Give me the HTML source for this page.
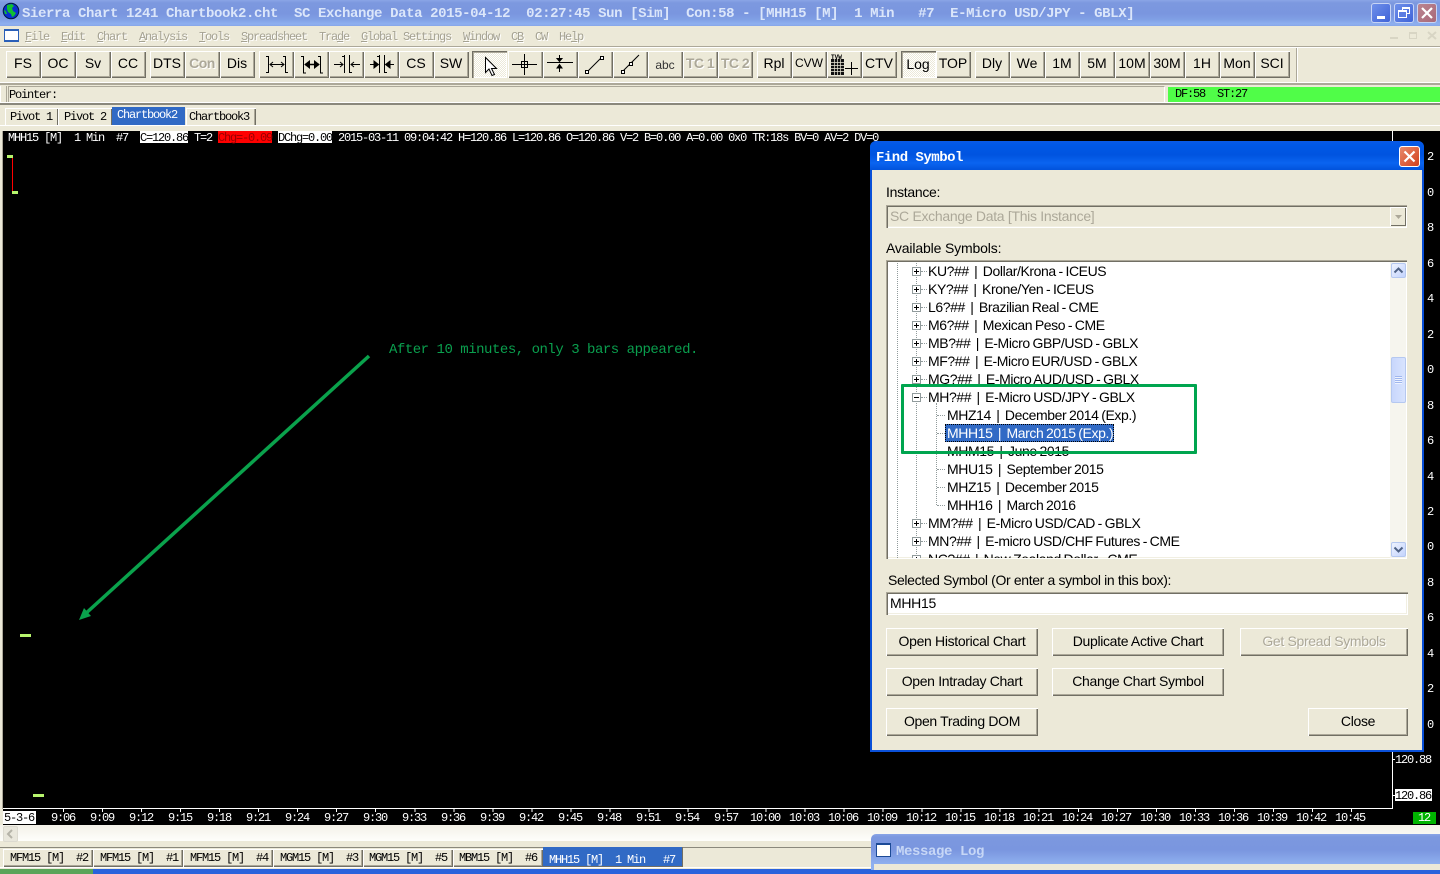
<!DOCTYPE html>
<html><head><meta charset="utf-8"><title>Sierra Chart</title>
<style>
html,body{margin:0;padding:0;width:1440px;height:874px;overflow:hidden;background:#ece9d8}
div,span{box-sizing:border-box}
.a{position:absolute}
.t{position:absolute;white-space:pre;font-family:"Liberation Mono",monospace;font-size:12px;letter-spacing:-1.2px;line-height:14px;color:#000}
.w{color:#fff}
.m{color:#a5a292;text-shadow:1px 1px 0 #fff}
.b{position:absolute;top:51px;width:35px;height:27px;background:#ece9d8;box-shadow:inset 1px 1px 0 #fff,inset -1px -1px 0 #716f64,inset -2px -2px 0 #aca899;font:14px/25px "Liberation Sans",sans-serif;text-align:center;color:#000;padding-right:1px}
.b.d{color:#aca899;font-weight:bold;text-shadow:1px 1px 0 #fff;letter-spacing:-.5px}
.b.p{background:repeating-conic-gradient(#fff 0 25%,#ece9d8 0 50%) 0 0/2px 2px;box-shadow:inset 1px 1px 0 #716f64,inset 2px 2px 0 #aca899,inset -1px -1px 0 #fff}
.b svg{position:absolute;left:0;top:0}
.s{font:14px/18px "Liberation Sans",sans-serif;position:absolute;white-space:pre;color:#000;letter-spacing:-.3px}
.db{position:absolute;height:28px;background:#ece9d8;box-shadow:inset 1px 1px 0 #fff,inset -1px -1px 0 #716f64,inset -2px -2px 0 #aca899;font:14px/26px "Liberation Sans",sans-serif;text-align:center;color:#000;letter-spacing:-.33px}
.inset{position:absolute;box-shadow:inset 1px 1px 0 #aca899,inset 2px 2px 0 #716f64,inset -1px -1px 0 #fff,inset -2px -2px 0 #f1efe2}
.tab{position:absolute;top:849px;height:18px;background:#ece9d8;box-shadow:inset 1px 1px 0 #fff,inset -1px -1px 0 #716f64,inset -2px -2px 0 #aca899}
.r{position:absolute;left:40px;font:14px/18px "Liberation Sans",sans-serif;white-space:pre;color:#000;letter-spacing:-.4px;word-spacing:-.8px}
.c{left:59px}
.pb{position:absolute;left:24px;width:9px;height:9px;border:1px solid #919b9c;background:#fff}
.pb:before{content:"";position:absolute;left:1px;top:3px;width:5px;height:1px;background:#000}
.pb.x:after{content:"";position:absolute;left:3px;top:1px;width:1px;height:5px;background:#000}
.dh{position:absolute;height:1px;border-top:1px dotted #919b9c}
.dv{position:absolute;width:1px;border-left:1px dotted #919b9c}
.ax{position:absolute;left:1427px;font:12px/14px "Liberation Mono",monospace;color:#fff}
.tm{position:absolute;top:811px;width:40px;text-align:center;font:12px/14px "Liberation Mono",monospace;letter-spacing:-1.2px;color:#fff}
</style></head><body>

<!-- title bar -->
<div class="a" style="left:0;top:0;width:1440px;height:26px;background:linear-gradient(#8aa5e6 0,#7c98df 3px,#7a96df 14px,#7f9fe4 19px,#8fb0ef 24px,#86a6e8 26px)"></div>
<svg class="a" style="left:2px;top:2px" width="18" height="18" viewBox="0 0 18 18"><circle cx="9" cy="9" r="7.8" fill="#0a2fd0" stroke="#001a40"/><path d="M5 3l5-1 2 2-2 2 1 3 3 2-2 3-2 1-1-3-3-2-1-3z" fill="#10c030"/><path d="M2 8l2 1 1 3-2 0z" fill="#10c030"/></svg>
<div class="t" style="left:22px;top:7px;font-size:14px;letter-spacing:-.4px;font-weight:bold;color:#dbe6fa">Sierra Chart 1241 Chartbook2.cht  SC Exchange Data 2015-04-12  02:27:45 Sun [Sim]  Con:58 - [MHH15 [M]  1 Min   #7  E-Micro USD/JPY - GBLX]</div>
<div class="a" style="left:1371px;top:3px;width:20px;height:20px;border-radius:3px;background:linear-gradient(135deg,#6f90ea,#3f63d8);border:1px solid #c7d4f5"><div class="a" style="left:5px;top:12px;width:8px;height:3px;background:#fff"></div></div>
<div class="a" style="left:1394px;top:3px;width:20px;height:20px;border-radius:3px;background:linear-gradient(135deg,#6f90ea,#3f63d8);border:1px solid #c7d4f5"><div class="a" style="left:7px;top:3px;width:8px;height:7px;border:1px solid #fff;border-top-width:2px"></div><div class="a" style="left:3px;top:6px;width:9px;height:8px;border:1px solid #fff;border-top-width:2px;background:#5b7de2"></div></div>
<div class="a" style="left:1417px;top:3px;width:20px;height:20px;border-radius:3px;background:linear-gradient(135deg,#bb8590,#a86878);border:1px solid #c7d4f5"><svg class="a" style="left:3px;top:3px" width="12" height="12"><path d="M1 1L11 11M11 1L1 11" stroke="#fff" stroke-width="2.2"/></svg></div>

<!-- menu -->
<div class="a" style="left:4px;top:29px;width:15px;height:13px;background:#fff;border:1px solid #2a5fb8;border-top-width:2px;border-bottom-width:2px"></div>
<div class="t m" style="left:25px;top:30px"><u>F</u>ile</div>
<div class="t m" style="left:61px;top:30px"><u>E</u>dit</div>
<div class="t m" style="left:97px;top:30px"><u>C</u>hart</div>
<div class="t m" style="left:139px;top:30px"><u>A</u>nalysis</div>
<div class="t m" style="left:199px;top:30px"><u>T</u>ools</div>
<div class="t m" style="left:241px;top:30px"><u>S</u>preadsheet</div>
<div class="t m" style="left:319px;top:30px">Tra<u>d</u>e</div>
<div class="t m" style="left:361px;top:30px"><u>G</u>lobal Settings</div>
<div class="t m" style="left:463px;top:30px"><u>W</u>indow</div>
<div class="t m" style="left:511px;top:30px">C<u>B</u></div>
<div class="t m" style="left:535px;top:30px">CW</div>
<div class="t m" style="left:559px;top:30px">He<u>l</u>p</div>
<div class="a" style="left:1390px;top:37px;width:8px;height:2px;background:#d8d5c4"></div>
<div class="a" style="left:1409px;top:32px;width:8px;height:7px;border:1px solid #d8d5c4;border-top-width:2px"></div>
<svg class="a" style="left:1427px;top:31px" width="10" height="9"><path d="M1 1L9 8M9 1L1 8" stroke="#d8d5c4" stroke-width="2"/></svg>

<div class="a" style="left:0;top:46px;width:1440px;height:1px;background:#aca899"></div>
<div class="a" style="left:0;top:47px;width:1440px;height:1px;background:#fff"></div>

<!-- toolbar -->
<div class="b" style="left:6px">FS</div>
<div class="b" style="left:41px">OC</div>
<div class="b" style="left:76px">Sv</div>
<div class="b" style="left:111px">CC</div>
<div class="b" style="left:150px">DTS</div>
<div class="b d" style="left:185px">Con</div>
<div class="b" style="left:220px">Dis</div>
<div class="b" style="left:259px"><svg width="35" height="27" fill="none" stroke="#000"><path d="M7 5.500H9.500V22M9.500 21.500H7M26.500 5V22M26.500 21.500H29M26.500 5.500H24"/><path d="M11 13.500H25M14 11L11 13.500 14 16M22 11L25 13.500 22 16"/></svg></div>
<div class="b" style="left:294px"><svg width="35" height="27" fill="none" stroke="#000"><path d="M7 5.500H9.500V22H12M26.500 5V22H29M26.500 5.500H24"/><path d="M11 13.500H25" stroke-width="1.500"/><path d="M11 13.500L15.500 10V17zM25 13.500L20.500 10V17z" fill="#000"/></svg></div>
<div class="b" style="left:329px"><svg width="35" height="27" fill="none" stroke="#000"><path d="M15.500 4V22M20.500 4V22M13 5.500H15.500M20.500 21.500H23"/><path d="M5 13.500H14M11 11L14 13.500 11 16M22 13.500H31M25 11L22 13.500 25 16"/></svg></div>
<div class="b" style="left:364px"><svg width="35" height="27" fill="none" stroke="#000"><path d="M15.500 4V22M20.500 4V22M13 5.500H15.500M20.500 21.500H23"/><path d="M6 13.500H14M22 13.500H30"/><path d="M14.500 13.500L10 10V17zM21.500 13.500L26 10V17z" fill="#000"/></svg></div>
<div class="b" style="left:399px">CS</div>
<div class="b" style="left:434px">SW</div>
<div class="b p" style="left:472px"><svg width="35" height="27"><path d="M13.500 6.500V21.500L17 18 20 24.500 22.500 23.500 19.500 17.500H24.500z" fill="#fff" stroke="#000"/></svg></div>
<div class="b" style="left:508px"><svg width="35" height="27" fill="none" stroke="#000"><path d="M4 13.500H29M16.500 3V24"/><rect x="13.500" y="10.500" width="6" height="6"/></svg></div>
<div class="b" style="left:543px"><svg width="35" height="27" fill="none" stroke="#000"><path d="M4 11.500H30M16.500 4V9.500M16.500 14V21"/><path d="M14 7.500L16.500 10.500 19 7.500zM14 17L16.500 13.500 19 17z" fill="#000"/></svg></div>
<div class="b" style="left:578px"><svg width="35" height="27" fill="none" stroke="#000"><path d="M10 20L23 7"/><rect x="7.500" y="19.500" width="3" height="3" fill="#fff"/><rect x="22.500" y="5.500" width="3" height="3" fill="#fff"/></svg></div>
<div class="b" style="left:613px"><svg width="35" height="27" fill="none" stroke="#000"><path d="M10 20L26 4"/><rect x="8.500" y="19.500" width="3" height="3" fill="#fff"/><rect x="16.500" y="11.500" width="3" height="3" fill="#fff"/></svg></div>
<div class="b" style="left:648px;font-size:12px;color:#333;line-height:28px">abc</div>
<div class="b d" style="left:683px">TC 1</div>
<div class="b d" style="left:718px">TC 2</div>
<div class="b" style="left:757px">Rpl</div>
<div class="b" style="left:792px;font-size:12px;line-height:24px">CVW</div>
<div class="b" style="left:827px"><svg width="35" height="27"><text x="4" y="8" font-family="Liberation Mono,monospace" font-size="6" font-weight="bold" letter-spacing="0">TVW</text><rect x="4" y="8" width="13" height="16" fill="#111"/><path d="M4 11.500H17M4 14.500H17M4 17.500H17M4 20.500H17M7.500 8V24M10.500 8V24M13.500 8V24" stroke="#ece9d8" stroke-width=".7"/><path d="M18 17.500H31M24.500 11V24" stroke="#000"/></svg></div>
<div class="b" style="left:862px">CTV</div>
<div class="b p" style="left:901px;line-height:26px">Log</div>
<div class="b" style="left:936px">TOP</div>
<div class="b" style="left:975px">Dly</div>
<div class="b" style="left:1010px">We</div>
<div class="b" style="left:1045px">1M</div>
<div class="b" style="left:1080px">5M</div>
<div class="b" style="left:1115px">10M</div>
<div class="b" style="left:1150px">30M</div>
<div class="b" style="left:1185px">1H</div>
<div class="b" style="left:1220px">Mon</div>
<div class="b" style="left:1255px">SCI</div>
<div class="a" style="left:1296px;top:48px;width:1px;height:34px;background:#aca899"></div>
<div class="a" style="left:1297px;top:48px;width:1px;height:34px;background:#fff"></div>

<div class="a" style="left:0;top:82px;width:1440px;height:1px;background:#fff"></div>
<div class="a" style="left:0;top:83px;width:1440px;height:2px;background:#aca899"></div>

<!-- status -->
<div class="a" style="left:0;top:86px;width:7px;height:16px;border-right:1px solid #aca899;border-left:1px solid #fff"></div>
<div class="a" style="left:8px;top:86px;width:1157px;height:16px;border-top:1px solid #aca899;border-left:1px solid #aca899;border-right:1px solid #fff"></div>
<div class="t" style="left:9px;top:88px">Pointer:</div>
<div class="a" style="left:1168px;top:87px;width:272px;height:15px;background:#50fd48"></div>
<div class="t" style="left:1175px;top:87px">DF:58  ST:27</div>
<div class="a" style="left:0;top:102px;width:1440px;height:1px;background:#fff"></div>
<div class="a" style="left:0;top:103px;width:1440px;height:2px;background:#8a887c"></div>

<!-- chart tabs -->
<div class="a" style="left:5px;top:108px;width:53px;height:17px;box-shadow:inset 1px 1px 0 #fff,inset -1px 0 0 #716f64"></div>
<div class="t" style="left:10px;top:110px">Pivot 1</div>
<div class="a" style="left:58px;top:108px;width:54px;height:17px;box-shadow:inset 1px 1px 0 #fff,inset -1px 0 0 #716f64"></div>
<div class="t" style="left:64px;top:110px">Pivot 2</div>
<div class="a" style="left:112px;top:107px;width:73px;height:18px;background:#316ac5"></div>
<div class="t w" style="left:117px;top:108px">Chartbook2</div>
<div class="a" style="left:186px;top:108px;width:70px;height:17px;box-shadow:inset 1px 1px 0 #fff,inset -1px 0 0 #716f64,inset -2px 0 0 #aca899"></div>
<div class="t" style="left:189px;top:110px">Chartbook3</div>
<div class="a" style="left:0;top:125px;width:1440px;height:1px;background:#fff"></div>

<!-- chart -->
<div class="a" style="left:3px;top:131px;width:1437px;height:694px;background:#000"></div>
<div class="a" style="left:2px;top:131px;width:1px;height:678px;background:#aca899"></div>
<div class="t w" style="left:8px;top:131px">MHH15 [M]  1 Min  #7</div>
<div class="a" style="left:140px;top:131px;width:48px;height:12px;background:#fff"></div>
<div class="t" style="left:140px;top:131px">C=120.86</div>
<div class="t w" style="left:194px;top:131px">T=2</div>
<div class="a" style="left:218px;top:131px;width:54px;height:12px;background:#f00"></div>
<div class="t" style="left:218px;top:131px;color:#900">Chg=-0.09</div>
<div class="a" style="left:278px;top:131px;width:54px;height:12px;background:#fff"></div>
<div class="t" style="left:278px;top:131px">DChg=0.00</div>
<div class="t w" style="left:338px;top:131px">2015-03-11 09:04:42 H=120.86 L=120.86 O=120.86 V=2 B=0.00 A=0.00 0x0 TR:18s BV=0 AV=2 DV=0</div>

<!-- bars -->
<div class="a" style="left:12px;top:156px;width:1px;height:36px;background:#f00"></div>
<div class="a" style="left:7px;top:155px;width:6px;height:3px;background:#b7f56d"></div>
<div class="a" style="left:12px;top:191px;width:6px;height:3px;background:#b7f56d"></div>
<div class="a" style="left:20px;top:634px;width:11px;height:3px;background:#b7f56d"></div>
<div class="a" style="left:33px;top:794px;width:11px;height:3px;background:#b7f56d"></div>

<!-- annotation -->
<div class="t" style="left:389px;top:343px;font-size:14px;letter-spacing:-.48px;color:#0a9f4e">After 10 minutes, only 3 bars appeared.</div>
<svg class="a" style="left:70px;top:345px" width="310" height="285"><path d="M299 11L14 270" stroke="#0aa24c" stroke-width="3.500" fill="none"/><path d="M9 275L14 263 21 271z" fill="#0aa24c"/></svg>

<!-- right axis -->
<div class="a" style="left:1392px;top:131px;width:1px;height:678px;background:#fff"></div>
<div class="a" style="left:3px;top:808px;width:1390px;height:1px;background:#fff"></div>
<div class="ax" style="top:150px">2</div><div class="ax" style="top:186px">0</div><div class="ax" style="top:221px">8</div><div class="ax" style="top:257px">6</div><div class="ax" style="top:292px">4</div><div class="ax" style="top:328px">2</div><div class="ax" style="top:363px">0</div><div class="ax" style="top:399px">8</div><div class="ax" style="top:434px">6</div><div class="ax" style="top:470px">4</div><div class="ax" style="top:505px">2</div><div class="ax" style="top:540px">0</div><div class="ax" style="top:576px">8</div><div class="ax" style="top:611px">6</div><div class="ax" style="top:647px">4</div><div class="ax" style="top:682px">2</div><div class="ax" style="top:718px">0</div>
<div class="a" style="left:1392px;top:759px;width:3px;height:1px;background:#fff"></div>
<div class="t w" style="left:1395px;top:753px">120.88</div>
<div class="a" style="left:1392px;top:795px;width:3px;height:1px;background:#fff"></div>
<div class="a" style="left:1395px;top:789px;width:37px;height:12px;background:#fff"></div>
<div class="t" style="left:1395px;top:789px">120.86</div>

<!-- time axis -->
<div class="a" style="left:63px;top:809px;width:1290px;height:3px;background:repeating-linear-gradient(90deg,#fff 0 1px,transparent 1px 39.03px)"></div>
<div class="a" style="left:3px;top:811px;width:33px;height:13px;background:#fff"></div>
<div class="t" style="left:4px;top:811px">5-3-6</div>
<div class="tm" style="left:43px">9:06</div><div class="tm" style="left:82px">9:09</div><div class="tm" style="left:121px">9:12</div><div class="tm" style="left:160px">9:15</div><div class="tm" style="left:199px">9:18</div><div class="tm" style="left:238px">9:21</div><div class="tm" style="left:277px">9:24</div><div class="tm" style="left:316px">9:27</div><div class="tm" style="left:355px">9:30</div><div class="tm" style="left:394px">9:33</div><div class="tm" style="left:433px">9:36</div><div class="tm" style="left:472px">9:39</div><div class="tm" style="left:511px">9:42</div><div class="tm" style="left:550px">9:45</div><div class="tm" style="left:589px">9:48</div><div class="tm" style="left:628px">9:51</div><div class="tm" style="left:667px">9:54</div><div class="tm" style="left:706px">9:57</div><div class="tm" style="left:745px">10:00</div><div class="tm" style="left:784px">10:03</div><div class="tm" style="left:823px">10:06</div><div class="tm" style="left:862px">10:09</div><div class="tm" style="left:901px">10:12</div><div class="tm" style="left:940px">10:15</div><div class="tm" style="left:979px">10:18</div><div class="tm" style="left:1018px">10:21</div><div class="tm" style="left:1057px">10:24</div><div class="tm" style="left:1096px">10:27</div><div class="tm" style="left:1135px">10:30</div><div class="tm" style="left:1174px">10:33</div><div class="tm" style="left:1213px">10:36</div><div class="tm" style="left:1252px">10:39</div><div class="tm" style="left:1291px">10:42</div><div class="tm" style="left:1330px">10:45</div>
<div class="a" style="left:1413px;top:812px;width:23px;height:12px;background:#00b400"></div>
<div class="t w" style="left:1418px;top:811px">12</div>

<!-- scrollbar + tabs -->
<div class="a" style="left:0;top:825px;width:1440px;height:16px;background:linear-gradient(#f3f1e8,#fefefb)"></div>
<div class="a" style="left:3px;top:826px;width:15px;height:16px;background:#e9e7dc;border:1px solid #dcdad0;border-radius:2px"></div>
<svg class="a" style="left:6px;top:829px" width="9" height="10"><path d="M6 1L2 5 6 9" stroke="#b5b3a8" stroke-width="2" fill="none"/></svg>
<div class="a" style="left:0;top:847px;width:1440px;height:1px;background:#8a887c"></div>
<div class="tab" style="left:3px;width:90px"></div><div class="t" style="left:10px;top:851px">MFM15 [M]  #2</div>
<div class="tab" style="left:93px;width:90px"></div><div class="t" style="left:100px;top:851px">MFM15 [M]  #1</div>
<div class="tab" style="left:183px;width:90px"></div><div class="t" style="left:190px;top:851px">MFM15 [M]  #4</div>
<div class="tab" style="left:273px;width:90px"></div><div class="t" style="left:280px;top:851px">MGM15 [M]  #3</div>
<div class="tab" style="left:363px;width:90px"></div><div class="t" style="left:369px;top:851px">MGM15 [M]  #5</div>
<div class="tab" style="left:453px;width:90px"></div><div class="t" style="left:459px;top:851px">MBM15 [M]  #6</div>
<div class="a" style="left:543px;top:847px;width:140px;height:20px;background:#316ac5;box-shadow:inset -1px -1px 0 #716f64"></div>
<div class="t w" style="left:549px;top:853px">MHH15 [M]  1 Min   #7</div>
<div class="a" style="left:0;top:867px;width:1440px;height:1px;background:#fff"></div>
<div class="a" style="left:0;top:869px;width:1440px;height:5px;background:#2a62dc"></div>
<div class="a" style="left:0;top:869px;width:93px;height:5px;background:#5aa45a"></div>

<!-- message log -->
<div class="a" style="left:871px;top:834px;width:569px;height:36px;border-radius:5px 0 0 0;background:linear-gradient(#8aa5e6 0,#7c98df 3px,#7a96df 16px,#8fb0ef 30px)"></div>
<div class="a" style="left:874px;top:864px;width:566px;height:6px;background:#ece9d8"></div>
<div class="a" style="left:876px;top:843px;width:15px;height:14px;background:#fff;border:1px solid #1c4a96;border-top-width:2px"></div>
<div class="t" style="left:896px;top:845px;font-size:14px;letter-spacing:-.4px;font-weight:bold;color:#c7d7f6">Message Log</div>
<div class="a" style="left:0;top:870px;width:1440px;height:4px;background:#2a62dc"></div>
<div class="a" style="left:0;top:870px;width:93px;height:4px;background:#5aa45a"></div>

<!-- dialog -->
<div class="a" style="left:870px;top:141px;width:554px;height:611px;border-radius:6px 6px 0 0;background:#0a50d8"></div>
<div class="a" style="left:870px;top:141px;width:554px;height:30px;border-radius:6px 6px 0 0;background:linear-gradient(#0a5ae6 0,#0058e6 4px,#0054e0 14px,#0a64f0 22px,#0050d8 30px)"></div>
<div class="a" style="left:872px;top:170px;width:550px;height:580px;background:#ece9d8"></div>
<div class="t" style="left:876px;top:151px;font-size:14px;letter-spacing:-.5px;font-weight:bold;color:#fff">Find Symbol</div>
<div class="a" style="left:1399px;top:146px;width:21px;height:21px;border-radius:3px;background:linear-gradient(135deg,#e88a6c,#d2401c);border:1px solid #fff"><svg class="a" style="left:3px;top:3px" width="13" height="13"><path d="M1.500 1.500L11.500 11.500M11.500 1.500L1.500 11.500" stroke="#fff" stroke-width="2.200"/></svg></div>

<div class="s" style="left:886px;top:183px">Instance:</div>
<div class="inset" style="left:886px;top:205px;width:521px;height:23px;background:#ece9d8"></div>
<div class="s" style="left:890px;top:207px;color:#aca899">SC Exchange Data [This Instance]</div>
<div class="a" style="left:1390px;top:207px;width:16px;height:19px;background:#ece9d8;box-shadow:inset 1px 1px 0 #fff,inset -1px -1px 0 #716f64"></div>
<svg class="a" style="left:1394px;top:214px" width="9" height="6"><path d="M1 1H8L4.500 5z" fill="#aca899"/></svg>
<div class="s" style="left:886px;top:239px;letter-spacing:-.15px">Available Symbols:</div>

<div class="inset" style="left:886px;top:260px;width:521px;height:299px;background:#fff"></div>
<div class="a" style="left:888px;top:263px;width:502px;height:295px;overflow:hidden">
 <div class="dv" style="left:9px;top:0;height:295px"></div>
 <div class="dv" style="left:28px;top:0;height:295px"></div>
 <div class="dv" style="left:48px;top:140px;height:102px"></div>
 <div class="dh" style="left:33px;top:8px;width:6px"></div><div class="dh" style="left:33px;top:26px;width:6px"></div><div class="dh" style="left:33px;top:44px;width:6px"></div><div class="dh" style="left:33px;top:62px;width:6px"></div><div class="dh" style="left:33px;top:80px;width:6px"></div><div class="dh" style="left:33px;top:98px;width:6px"></div><div class="dh" style="left:33px;top:116px;width:6px"></div><div class="dh" style="left:33px;top:134px;width:6px"></div>
 <div class="dh" style="left:49px;top:152px;width:8px"></div><div class="dh" style="left:49px;top:170px;width:8px"></div><div class="dh" style="left:49px;top:188px;width:8px"></div><div class="dh" style="left:49px;top:206px;width:8px"></div><div class="dh" style="left:49px;top:224px;width:8px"></div><div class="dh" style="left:49px;top:242px;width:8px"></div>
 <div class="dh" style="left:33px;top:260px;width:6px"></div><div class="dh" style="left:33px;top:278px;width:6px"></div>
 <div class="pb x" style="top:4px"></div><div class="pb x" style="top:22px"></div><div class="pb x" style="top:40px"></div><div class="pb x" style="top:58px"></div><div class="pb x" style="top:76px"></div><div class="pb x" style="top:94px"></div><div class="pb x" style="top:112px"></div><div class="pb" style="top:130px"></div><div class="pb x" style="top:256px"></div><div class="pb x" style="top:274px"></div><div class="pb x" style="top:292px"></div>
 <div class="r" style="top:-1px">KU?##  |  Dollar/Krona - ICEUS</div>
 <div class="r" style="top:17px">KY?##  |  Krone/Yen - ICEUS</div>
 <div class="r" style="top:35px">L6?##  |  Brazilian Real - CME</div>
 <div class="r" style="top:53px">M6?##  |  Mexican Peso - CME</div>
 <div class="r" style="top:71px">MB?##  |  E-Micro GBP/USD - GBLX</div>
 <div class="r" style="top:89px">MF?##  |  E-Micro EUR/USD - GBLX</div>
 <div class="r" style="top:107px">MG?##  |  E-Micro AUD/USD - GBLX</div>
 <div class="r" style="top:125px">MH?##  |  E-Micro USD/JPY - GBLX</div>
 <div class="r c" style="top:143px">MHZ14  |  December 2014 (Exp.)</div>
 <div class="a" style="left:57px;top:161px;width:169px;height:18px;background:#316ac5;border:1px dotted #000"></div>
 <div class="r c" style="top:161px;color:#fff">MHH15  |  March 2015 (Exp.)</div>
 <div class="r c" style="top:179px">MHM15  |  June 2015</div>
 <div class="r c" style="top:197px">MHU15  |  September 2015</div>
 <div class="r c" style="top:215px">MHZ15  |  December 2015</div>
 <div class="r c" style="top:233px">MHH16  |  March 2016</div>
 <div class="r" style="top:251px">MM?##  |  E-Micro USD/CAD - GBLX</div>
 <div class="r" style="top:269px">MN?##  |  E-micro USD/CHF Futures - CME</div>
 <div class="r" style="top:287px">NC?##  |  New Zealand Dollar - CME</div>
</div>
<!-- list scrollbar -->
<div class="a" style="left:1390px;top:262px;width:16px;height:296px;background:#f6f5ee"></div>
<div class="a" style="left:1391px;top:263px;width:15px;height:15px;border-radius:2px;background:linear-gradient(135deg,#eef3fe,#c3d3fd);border:1px solid #b5c8f0"></div>
<svg class="a" style="left:1393px;top:267px" width="11" height="7"><path d="M1.500 5.500L5.500 1.500 9.500 5.500" stroke="#4d6185" stroke-width="2" fill="none"/></svg>
<div class="a" style="left:1391px;top:542px;width:15px;height:15px;border-radius:2px;background:linear-gradient(135deg,#eef3fe,#c3d3fd);border:1px solid #b5c8f0"></div>
<svg class="a" style="left:1393px;top:546px" width="11" height="7"><path d="M1.500 1.500L5.500 5.500 9.500 1.500" stroke="#4d6185" stroke-width="2" fill="none"/></svg>
<div class="a" style="left:1391px;top:357px;width:15px;height:46px;border-radius:2px;background:linear-gradient(90deg,#c8d7fc,#d8e3fe);border:1px solid #b5c8f0"></div>
<div class="a" style="left:1395px;top:376px;width:7px;height:8px;background:repeating-linear-gradient(#9fb6ee 0 1px,#eef3fe 1px 2px)"></div>

<!-- green highlight -->
<div class="a" style="left:901px;top:384px;width:296px;height:70px;border:3px solid #00a54f;border-radius:1px"></div>

<div class="s" style="left:888px;top:571px;letter-spacing:-.36px">Selected Symbol (Or enter a symbol in this box):</div>
<div class="inset" style="left:886px;top:592px;width:522px;height:23px;background:#fff"></div>
<div class="s" style="left:890px;top:594px">MHH15</div>

<div class="db" style="left:886px;top:628px;width:152px">Open Historical Chart</div>
<div class="db" style="left:1052px;top:628px;width:172px">Duplicate Active Chart</div>
<div class="db" style="left:1240px;top:628px;width:168px;color:#aca899;text-shadow:1px 1px 0 #fff">Get Spread Symbols</div>
<div class="db" style="left:886px;top:668px;width:152px">Open Intraday Chart</div>
<div class="db" style="left:1052px;top:668px;width:172px">Change Chart Symbol</div>
<div class="db" style="left:886px;top:708px;width:152px">Open Trading DOM</div>
<div class="db" style="left:1308px;top:708px;width:100px">Close</div>

</body></html>
